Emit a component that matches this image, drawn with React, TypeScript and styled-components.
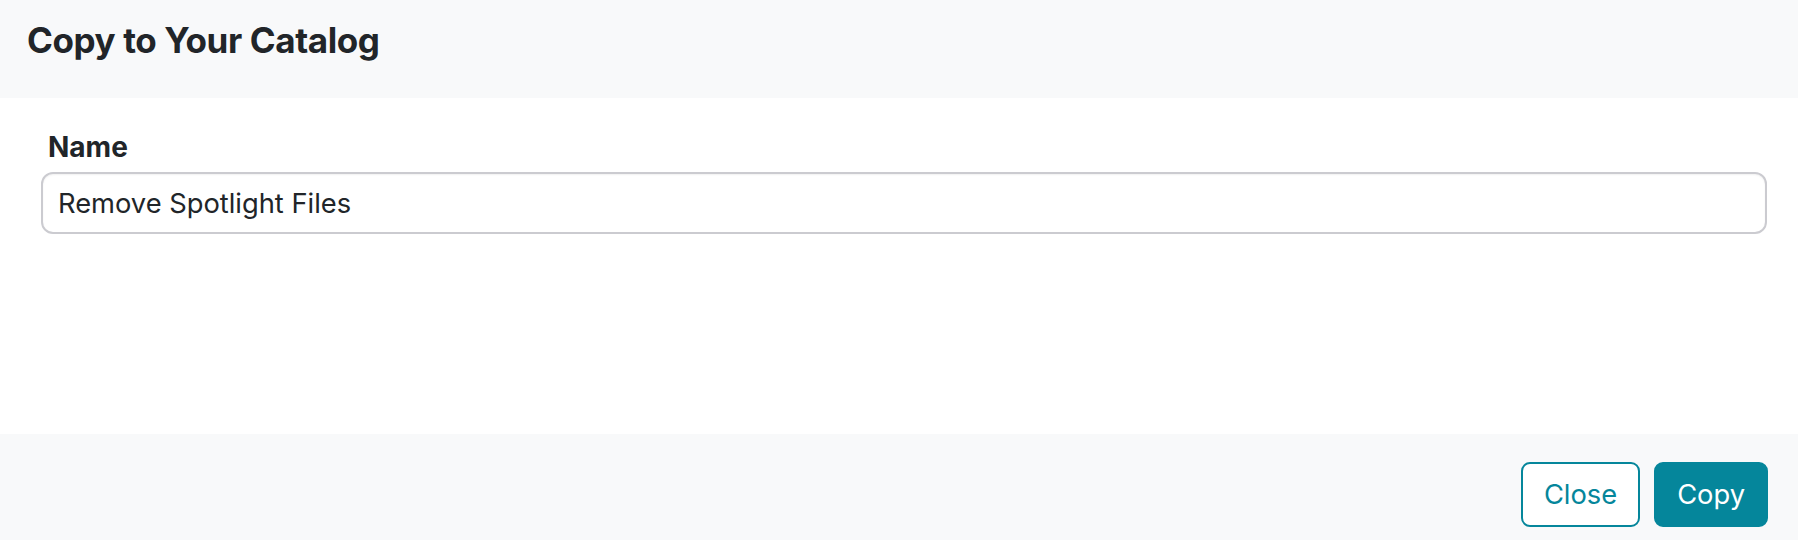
import React from 'react';
import styled, { createGlobalStyle } from 'styled-components';

const GlobalStyle = createGlobalStyle`
  html, body {
    margin: 0;
    padding: 0;
    background: #fff;
  }
  body {
    font-family: Inter, 'Noto Sans', 'Liberation Sans', sans-serif;
    color: #212529;
  }
`;

const Modal = styled.div`
  width: 1798px;
  height: 540px;
  display: flex;
  flex-direction: column;
  overflow: hidden;
  background: #fff;
`;

const Header = styled.header`
  height: 98px;
  box-sizing: border-box;
  padding: 19px 27px 0;
  background: #f8f9fa;
`;

const Title = styled.h5`
  margin: 0;
  font-size: 35px;
  line-height: 1.2;
  font-weight: 700;
  letter-spacing: -0.4px;
  color: #212529;
`;

const Body = styled.div`
  flex: 1;
  display: flex;
  flex-direction: column;
  padding: 28px 31px 0 41px;
`;

const Label = styled.label`
  display: block;
  padding-left: 7px;
  margin-bottom: 4px;
  font-size: 28px;
  line-height: 42px;
  font-weight: 700;
  color: #212529;
`;

const Input = styled.input`
  box-sizing: border-box;
  width: 100%;
  height: 62px;
  padding: 0 15px;
  font-family: inherit;
  font-size: 27.3px;
  color: #212529;
  background: #fff;
  border: 2px solid #cbcbd0;
  border-radius: 12px;
  box-shadow: inset 0 1px 2px rgba(0, 0, 0, 0.06);
  outline: none;
`;

const Footer = styled.footer`
  height: 106px;
  box-sizing: border-box;
  display: flex;
  justify-content: flex-end;
  align-items: flex-start;
  gap: 14px;
  padding: 28px 30px 0;
  background: #f8f9fa;
`;

const Button = styled.button<{ $primary?: boolean }>`
  box-sizing: border-box;
  height: 65px;
  padding: 0 21px;
  font-family: inherit;
  font-size: 27.3px;
  font-weight: 400;
  border-radius: 9px;
  border: 2px solid #05869b;
  color: ${({ $primary }) => ($primary ? '#fff' : '#05869b')};
  background: ${({ $primary }) => ($primary ? '#05869b' : '#fff')};
  cursor: pointer;
`;

export default function App() {
  return (
    <>
      <GlobalStyle />
      <Modal>
        <Header>
          <Title>Copy to Your Catalog</Title>
        </Header>
        <Body>
          <Label htmlFor="name">Name</Label>
          <Input id="name" defaultValue="Remove Spotlight Files" />
        </Body>
        <Footer>
          <Button>Close</Button>
          <Button $primary>Copy</Button>
        </Footer>
      </Modal>
    </>
  );
}
